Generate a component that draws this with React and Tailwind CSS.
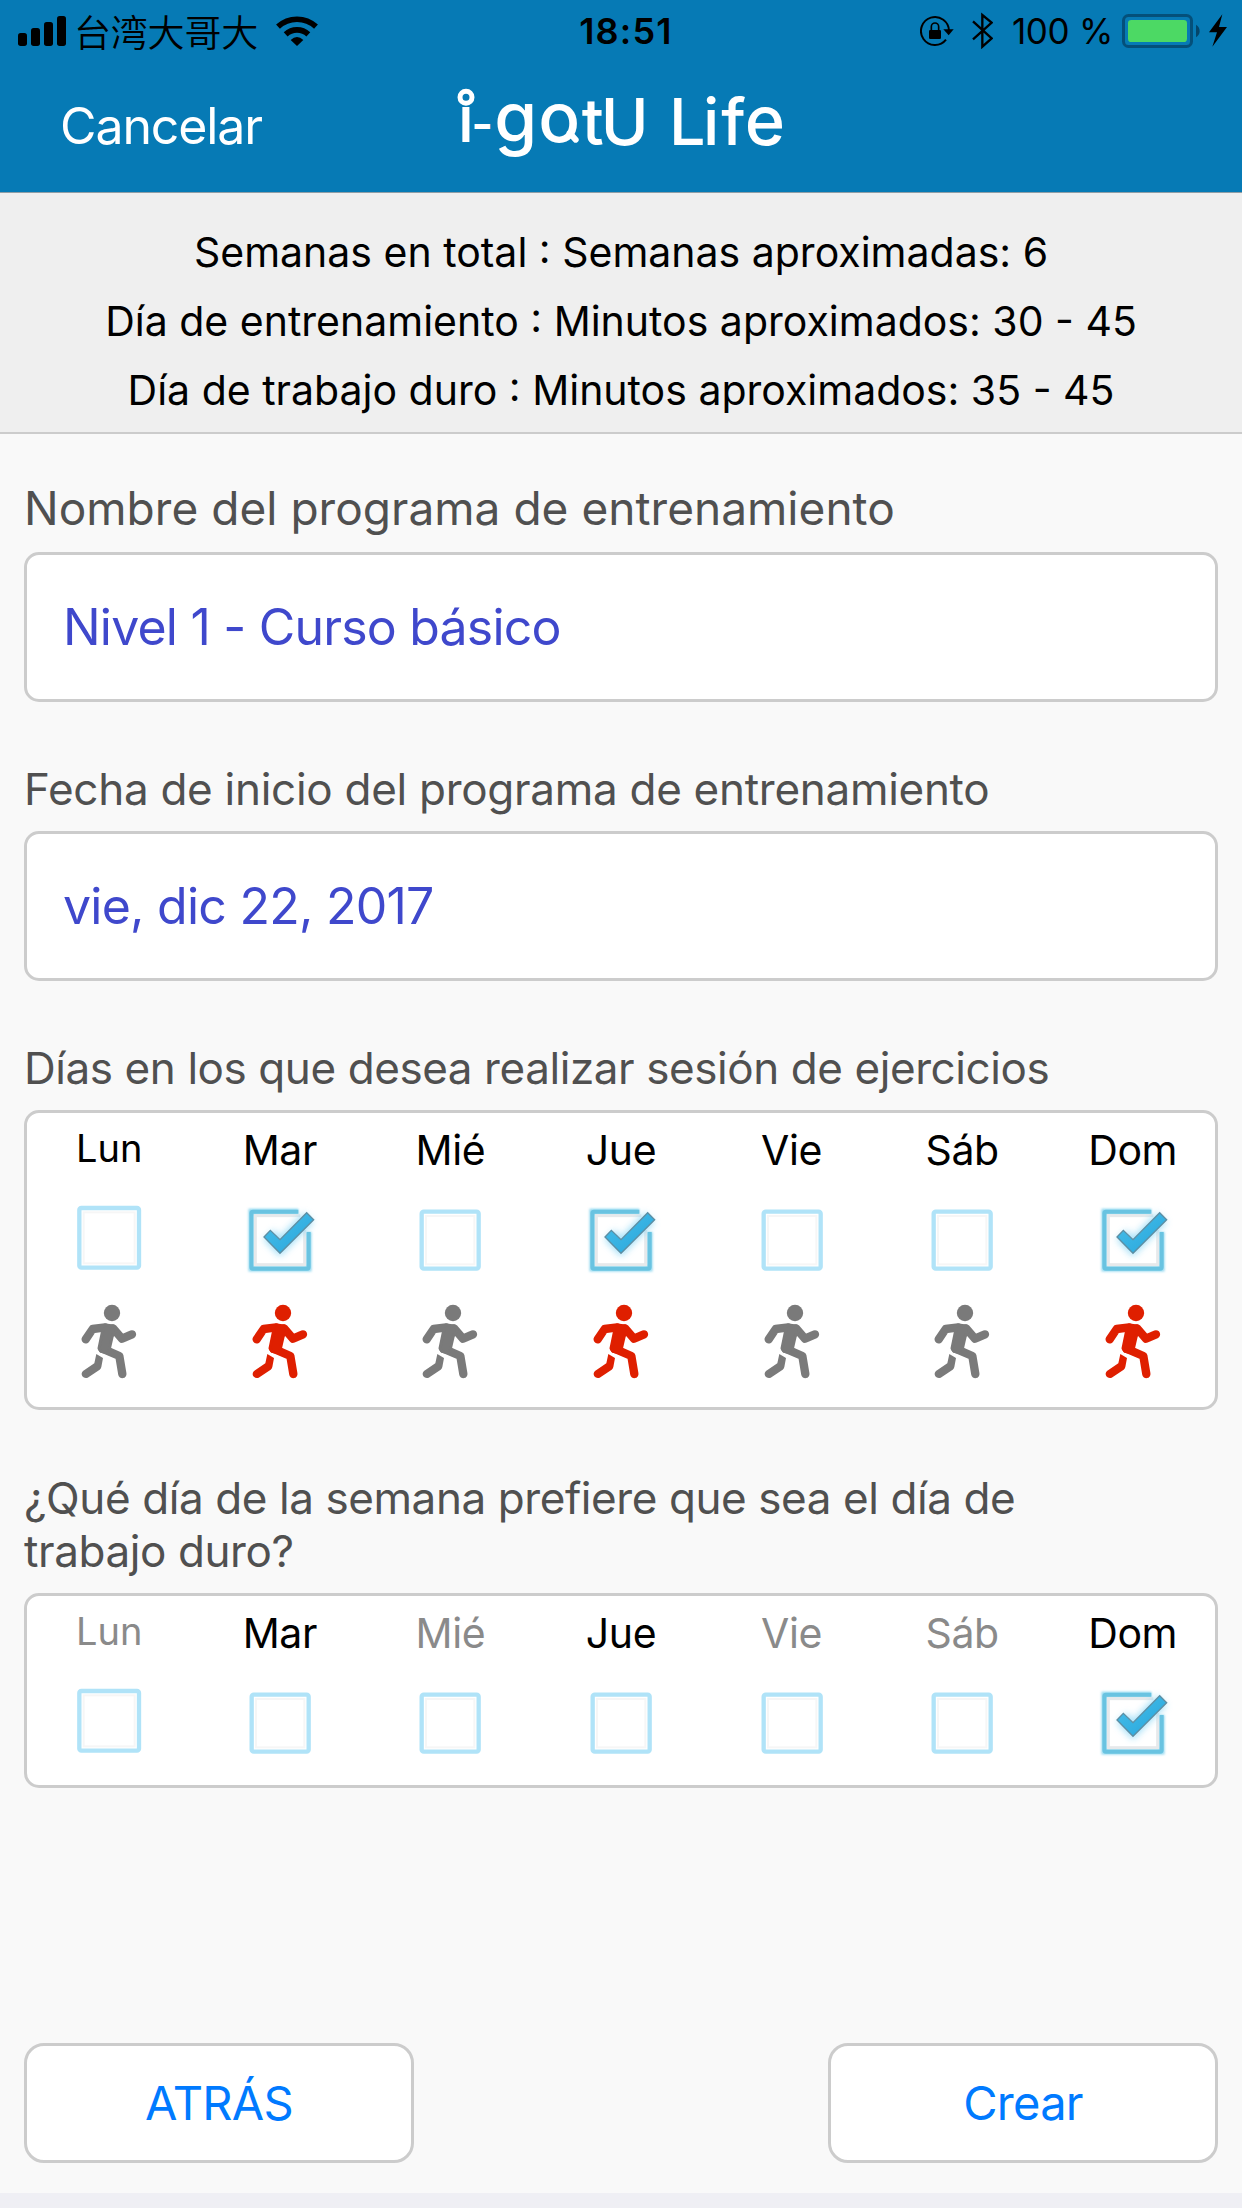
import React, { useState } from 'react';

const WEEK = ['Lun', 'Mar', 'Mié', 'Jue', 'Vie', 'Sáb', 'Dom'];

const SUMMARY = [
  'Semanas en total : Semanas aproximadas: 6',
  'Día de entrenamiento : Minutos aproximados: 30 - 45',
  'Día de trabajo duro : Minutos aproximados: 35 - 45',
];

const SignalIcon = () => (
  <svg viewBox="54 45 144 90" className="w-12 h-[30px] shrink-0">
    <rect x="54" y="96" width="27" height="39" rx="8" />
    <rect x="93" y="81" width="27" height="54" rx="8" />
    <rect x="132" y="63" width="27" height="72" rx="8" />
    <rect x="171" y="45" width="27" height="90" rx="8" />
  </svg>
);

const WifiIcon = () => (
  <svg viewBox="828 45 126 90" className="w-[42px] h-[30px] shrink-0">
    <g fill="none" stroke="black" strokeWidth="17">
      <path d="M834 77 A84 84 0 0 1 948 77" />
      <path d="M857 100 A50 50 0 0 1 925 100" />
    </g>
    <path d="M872 117 Q891 99 910 117 L891 135 Z" />
  </svg>
);

const RotationLockIcon = () => (
  <svg viewBox="240 42 102 96" className="w-[34px] h-8 shrink-0">
    <path d="M327 90 A42 42 0 1 0 318 116" fill="none" stroke="black" strokeWidth="6" />
    <path d="M310 85 H341 L326 103 Z" />
    <rect x="267" y="87" width="36" height="27" rx="4" />
    <path d="M274 89 V77 a11 11 0 0 1 22 0 V89" fill="none" stroke="black" strokeWidth="5" />
  </svg>
);

const BluetoothIcon = () => (
  <svg viewBox="396 36 63 111" className="w-[21px] h-[37px] shrink-0">
    <path
      d="M399 64 L455 115 L427 140 V45 L455 68 L399 118"
      fill="none"
      stroke="black"
      strokeWidth="7"
    />
  </svg>
);

const BatteryIcon = () => (
  <svg viewBox="846 39 234 102" className="w-[78px] h-[34px] shrink-0">
    <rect x="850.5" y="43.5" width="204" height="93" rx="15" fill="none" stroke="#04507a" strokeWidth="9" />
    <rect x="864" y="57" width="177" height="66" rx="10" fill="#4cd964" />
    <path d="M1068 71 Q1079 78 1079 90 Q1079 102 1068 109 Z" fill="#04456a" />
  </svg>
);

const BoltIcon = () => (
  <svg viewBox="1107 42 54 99" className="w-[18px] h-[33px] shrink-0">
    <path d="M1147 43 L1107 97 H1131 L1117 140 L1161 81 H1137 Z" />
  </svg>
);

const Logo = () => (
  <svg viewBox="114 262 984 228" className="w-[328px] h-[76px] overflow-visible" fill="white">
    <text fontFamily="Inter, sans-serif" fontSize="194" fontWeight="500">
      <tspan x="116" y="421">i</tspan>
      <tspan x="157" y="419" fontSize="142" fontWeight="600">-</tspan>
      <tspan x="226 358" y="421" fontSize="208">go</tspan>
      <tspan x="488 545 690 750 852 907" y="431">tU Lif</tspan>
      <tspan x="977" y="431" fontSize="206">e</tspan>
    </text>
    {/* ring over the i and tail of the o */}
    <circle cx="141" cy="287" r="18" fill="#067ab5" stroke="white" strokeWidth="15" />
    <path d="M452 394 L470 414" stroke="white" strokeWidth="18" strokeLinecap="round" />
  </svg>
);

const Checkbox = ({ checked, large }) => {
  if (checked) {
    return (
      <svg viewBox="720 480 240 240" className="size-20 overflow-visible">
        <defs>
          <filter id="glow" x="-50%" y="-50%" width="200%" height="200%">
            <feGaussianBlur stdDeviation="11" />
          </filter>
          <filter id="soft" x="-20%" y="-20%" width="140%" height="140%">
            <feGaussianBlur stdDeviation="3" />
          </filter>
          <linearGradient id="tick" x1="0" y1="0" x2="1" y2="1">
            <stop offset="0" stopColor="#49bfe9" />
            <stop offset="1" stopColor="#25a5dc" />
          </linearGradient>
        </defs>
        <path
          d="M895 515 H754 V686 H926 V576"
          fill="none"
          stroke="#8fd8f0"
          strokeWidth="17"
          filter="url(#soft)"
        />
        <rect x="766" y="527" width="148" height="147" fill="white" stroke="#e6e9eb" strokeWidth="9" />
        <path d="M901 522 H922 V570 H901 Z" fill="white" />
        <path
          d="M806 584 L840 620 L926 532"
          fill="none"
          stroke="#7fd3f5"
          strokeWidth="42"
          opacity="0.7"
          filter="url(#glow)"
        />
        <path
          d="M895 515 H759 Q754 515 754 520 V681 Q754 686 759 686 H921 Q926 686 926 681 V576"
          fill="none"
          stroke="#69c3e1"
          strokeWidth="12"
        />
        <path
          d="M792 591 L811 571 L840 599 L920 518 L941 539 L840 640 Z"
          fill="url(#tick)"
          stroke="#5d8ea3"
          strokeWidth="4"
        />
      </svg>
    );
  }

  // the first column carries a slightly larger box
  if (large) {
    return (
      <svg viewBox="720 480 240 240" className="size-20">
        <rect x="751" y="504" width="179" height="179" rx="6" fill="white" stroke="#b0e3f8" strokeWidth="13" />
        <rect x="764" y="517" width="153" height="153" fill="none" stroke="#f6f6f6" strokeWidth="6" />
      </svg>
    );
  }

  return (
    <svg viewBox="720 480 240 240" className="size-20">
      <rect x="755" y="515" width="171" height="171" rx="6" fill="white" stroke="#b0e3f8" strokeWidth="13" />
      <rect x="768" y="528" width="145" height="145" fill="none" stroke="#f6f6f6" strokeWidth="6" />
    </svg>
  );
};

const Runner = ({ active }) => (
  <svg viewBox="208 780 240 240" className={`size-20 ${active ? 'text-[#df1f00]' : 'text-[#7a7a7a]'}`}>
    <circle cx="337" cy="819" r="24.5" fill="currentColor" />
    <g fill="none" stroke="currentColor" strokeWidth="25" strokeLinecap="round" strokeLinejoin="round">
      <path d="M258 898 L279 867 L317 862" />
      <path d="M340 865 L367 896 L397 883" />
      <path d="M308 926 L359 948 L368 1002" />
    </g>
    {/* rear leg, cut off square below the hip */}
    <path
      d="M290 942 L310 954 L305 981 Q304 986 300 989 L264 1013 Q254 1016 248 1009 Q243 1000 250 993 L284 970 Z"
      fill="currentColor"
    />
    <path
      d="M306 859 L317 855 L342 858 L350 872 L338 888 L329 927 L344 944 L304 934 L298 925 L309 872 Z"
      fill="currentColor"
      stroke="currentColor"
      strokeWidth="9"
      strokeLinejoin="round"
    />
  </svg>
);

const DayColumn = ({ day, first, checked, muted, onToggle, children }) => (
  <div className="flex flex-col items-center">
    <span
      className={`h-[87px] leading-[50px] ${first ? 'text-[38px] pt-[10px]' : 'text-[41px] tracking-[-0.4px] pt-3'} ${
        muted ? 'text-[#8a8a8a]' : 'text-black'
      }`}
    >
      {day}
    </span>
    <button type="button" onClick={onToggle} disabled={muted} className="size-20">
      <Checkbox checked={checked} large={first} />
    </button>
    {children}
  </div>
);

const Label = ({ className, children }) => (
  <p className={`text-[#505050] whitespace-nowrap ${className}`}>{children}</p>
);

const App = () => {
  const [trainingDays, setTrainingDays] = useState(['Mar', 'Jue', 'Dom']);
  const [hardDay, setHardDay] = useState('Dom');

  const toggleDay = (day) => {
    setTrainingDays((days) => (days.includes(day) ? days.filter((d) => d !== day) : [...days, day]));
  };

  return (
    <div className="w-[1242px] h-[2208px] flex flex-col overflow-hidden bg-[#f9f9f9] font-['Inter','Noto_Sans_CJK_SC',sans-serif] text-black">
      {/* Header */}
      <header className="h-[193px] shrink-0 bg-[#067ab5] border-b border-[#8f9ea6]">
        <div className="h-[61px] grid grid-cols-[1fr_auto_1fr] items-center pl-[18px] pr-[15px]">
          <div className="flex items-center">
            <SignalIcon />
            <span className="ml-[8px] mr-[18px] text-[37px] leading-[44px] font-[350] tracking-[-0.2px] font-['Noto_Sans_CJK_SC',sans-serif]">
              台湾大哥大
            </span>
            <WifiIcon />
          </div>
          <span className="pl-[7px] text-[36px] leading-[44px] font-semibold tracking-[1.2px]">18:51</span>
          <div className="flex items-center justify-end">
            <RotationLockIcon />
            <span className="w-[18px]" />
            <BluetoothIcon />
            <span className="ml-[19px] mr-[9px] text-[35px] leading-[44px] tracking-[-0.3px] whitespace-nowrap">100 %</span>
            <BatteryIcon />
            <span className="w-[9px]" />
            <BoltIcon />
          </div>
        </div>
        <div className="h-[131px] grid grid-cols-[1fr_auto_1fr] items-center">
          <button type="button" className="justify-self-start pl-[60px] pb-[2px] text-[50px] leading-[60px] text-white tracking-[-1.1px]">
            Cancelar
          </button>
          <Logo />
        </div>
      </header>

      {/* Summary */}
      <section className="h-[241px] shrink-0 pt-[25px] bg-[#efefef] border-b-2 border-[#ccc] text-center text-[41px] leading-[69px]">
        {SUMMARY.map((line) => (
          <p key={line}>{line}</p>
        ))}
      </section>

      <main className="flex-1 flex flex-col px-[24px] pt-[44px]">
        <Label className="text-[46px] leading-[60px] tracking-[0.03px]">Nombre del programa de entrenamiento</Label>
        <div className="mt-[14px] h-[150px] flex items-center px-[36px] bg-white border-3 border-[#ccc] rounded-[15px] text-[50px] tracking-[-0.8px] text-[#3f48cc]">
          Nivel 1 - Curso básico
        </div>

        <Label className="mt-[57px] text-[44px] leading-[60px] tracking-[-0.28px]">
          Fecha de inicio del programa de entrenamiento
        </Label>
        <div className="mt-[12px] h-[150px] flex items-center px-[36px] bg-white border-3 border-[#ccc] rounded-[15px] text-[50px] tracking-[-0.75px] text-[#3f48cc]">
          vie, dic 22, 2017
        </div>

        <Label className="mt-[57px] text-[44px] leading-[60px] tracking-[-0.42px]">
          Días en los que desea realizar sesión de ejercicios
        </Label>
        <div className="mt-[12px] h-[300px] bg-white border-3 border-[#ccc] rounded-[15px]">
          <div className="-mx-[3px] grid grid-cols-7">
            {WEEK.map((day, i) => (
              <DayColumn
                key={day}
                day={day}
                first={i === 0}
                checked={trainingDays.includes(day)}
                onToggle={() => toggleDay(day)}
              >
                <div className="mt-5">
                  <Runner active={trainingDays.includes(day)} />
                </div>
              </DayColumn>
            ))}
          </div>
        </div>

        <Label className="mt-[62px] text-[44px] leading-[53px] tracking-[-0.41px]">
          ¿Qué día de la semana prefiere que sea el día de
          <br />
          trabajo duro?
        </Label>
        <div className="mt-[15px] h-[195px] bg-white border-3 border-[#ccc] rounded-[15px]">
          <div className="-mx-[3px] grid grid-cols-7">
            {WEEK.map((day, i) => (
              <DayColumn
                key={day}
                day={day}
                first={i === 0}
                checked={hardDay === day}
                muted={!trainingDays.includes(day)}
                onToggle={() => setHardDay(day)}
              />
            ))}
          </div>
        </div>

        {/* Actions */}
        <div className="mt-auto mb-[30px] flex justify-between text-[47px] tracking-[-0.7px] text-[#007aff]">
          <button type="button" className="w-[390px] h-[120px] bg-white border-3 border-[#ccc] rounded-[20px]">
            ATRÁS
          </button>
          <button type="button" className="w-[390px] h-[120px] bg-white border-3 border-[#ccc] rounded-[20px]">
            Crear
          </button>
        </div>
      </main>

      <footer className="h-[15px] shrink-0 bg-[#efeff4]" />
    </div>
  );
};

export default App;
